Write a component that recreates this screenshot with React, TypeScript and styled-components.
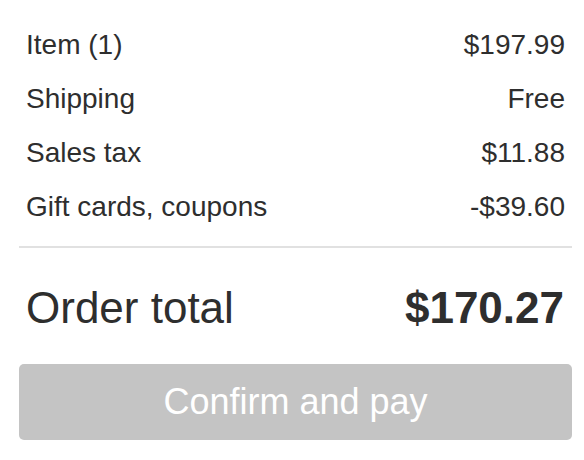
import React from 'react';
import styled, { createGlobalStyle } from 'styled-components';

const GlobalStyle = createGlobalStyle`
	body {
		margin: 0;
		background: #ffffff;
		font-family: 'Liberation Sans', Arial, Helvetica, sans-serif;
		color: #2e2e2e;
	}
`;

const lines = [
	{ label: 'Item (1)', value: '$197.99' },
	{ label: 'Shipping', value: 'Free' },
	{ label: 'Sales tax', value: '$11.88' },
	{ label: 'Gift cards, coupons', value: '-$39.60' },
];

export default function App() {
	return (
		<>
			<GlobalStyle />
			<Summary>
				<LineList>
					{lines.map((line) => (
						<Line key={line.label}>
							<span>{line.label}</span>
							<span>{line.value}</span>
						</Line>
					))}
				</LineList>
				<Divider />
				<TotalRow>
					<TotalLabel>Order total</TotalLabel>
					<TotalValue>$170.27</TotalValue>
				</TotalRow>
				<PayButton disabled>Confirm and pay</PayButton>
			</Summary>
		</>
	);
}

const Summary = styled.div`
	display: flex;
	flex-direction: column;
	padding: 18px 12px 0 19px;
`;
const LineList = styled.div`
	display: flex;
	flex-direction: column;
`;
const Line = styled.div`
	display: flex;
	flex-direction: row;
	justify-content: space-between;
	align-items: center;
	padding: 0 7px;
	height: 54px;
	line-height: 54px;
	font-size: 28px;
	color: #2e2e2e;
`;
const Divider = styled.hr`
	border: none;
	height: 2px;
	background-color: #e1e1e1;
	margin: 12px 0 30px 0;
`;
const TotalRow = styled.div`
	display: flex;
	flex-direction: row;
	justify-content: space-between;
	align-items: center;
	padding: 0 8px 0 7px;
	height: 60px;
	line-height: 60px;
	font-size: 44px;
	color: #2e2e2e;
`;
const TotalLabel = styled.span`
	font-weight: 400;
`;
const TotalValue = styled.span`
	font-weight: 700;
`;
const PayButton = styled.button`
	margin-top: 26px;
	height: 76px;
	width: 100%;
	border: none;
	border-radius: 5px;
	background-color: #c4c4c4;
	color: #ffffff;
	font-family: 'Liberation Sans', Arial, Helvetica, sans-serif;
	font-size: 36px;
	line-height: 76px;
	padding: 0;
	cursor: not-allowed;
`;
